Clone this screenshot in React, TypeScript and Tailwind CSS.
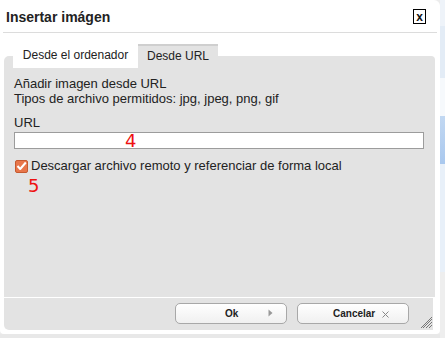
import React from "react";

export default function App() {
  const font = { fontFamily: '"Liberation Sans", Arial, sans-serif' };
  const dv = { fontFamily: '"DejaVu Sans", sans-serif' };
  return (
    <div className="w-[445px] h-[338px] flex bg-[#ececec] overflow-hidden" style={font}>
      <div className="w-[440px] h-[338px] flex flex-col">
        <div className="w-[440px] h-[334px] bg-white rounded-tr-[6px] rounded-b-[4px] flex flex-col">
          {/* title */}
          <div className="h-[33px] mx-[3px] border-b border-[#dcdcdc] flex items-center justify-between pl-[3px] pr-[11px]">
            <span className="text-[14px] font-bold text-[#222] leading-none mt-[1px]">Insertar imágen</span>
            <div className="w-[13px] h-[15px] border border-black bg-white flex items-center justify-center mt-[1px]">
              <span className="text-[12px] font-bold leading-none text-[#111]">x</span>
            </div>
          </div>
          {/* tabs */}
          <div className="h-[24px] mt-[11px] pl-[13px] flex text-[12px] text-[#222] relative z-10">
            <div className="w-[125px] h-[24px] bg-white flex items-center justify-center pb-[2px]">Desde el ordenador</div>
            <div className="w-[80px] h-[24px] bg-[#e3e3e3] border-t-[2px] border-[#cfcfcf] flex items-center justify-center pb-[2px]">Desde URL</div>
          </div>
          {/* panel */}
          <div className="mx-[4px] w-[431px] h-[241px] -mt-[12px] bg-[#e3e3e3] rounded-tl-[5px] rounded-tr-[4px] flex flex-col px-[10px] pt-[20px] text-[13px] text-[#222]">
            <div className="leading-[15px]">Añadir imagen desde URL</div>
            <div className="leading-[15px]">Tipos de archivo permitidos: jpg, jpeg, png, gif</div>
            <div className="leading-[16px] mt-[9px]">URL</div>
            <div className="mt-[1px] w-[410px] h-[17px] bg-white border border-[#9c9c9c] flex items-center pl-[110px]">
              <span className="text-[18px] text-[#ee1111] leading-none" style={dv}>4</span>
            </div>
            <div className="mt-[9px] flex items-center gap-[3px] ml-[1px]">
              <div className="w-[13px] h-[13px] rounded-[2px] bg-[#e8764a] border border-[#c55a30] flex items-center justify-center">
                <svg width="11" height="10" viewBox="0 0 11 10">
                  <path d="M1.5 5 L4.2 8 L9.8 1.5" stroke="white" strokeWidth="2" fill="none" strokeLinejoin="round" />
                </svg>
              </div>
              <span className="leading-[16px]">Descargar archivo remoto y referenciar de forma local</span>
            </div>
            <div className="ml-[14px] mt-[3px]">
              <span className="text-[18px] text-[#ee1111] leading-none" style={dv}>5</span>
            </div>
          </div>
          {/* footer */}
          <div className="mx-[4px] w-[429px] h-[32px] mt-[1px] bg-[#e3e3e3] rounded-bl-[5px] flex items-center relative">
            <div className="ml-[171px] w-[112px] h-[21px] rounded-[5px] border border-[#a8a8a8] bg-[linear-gradient(#ffffff,#f0f0f0)] flex items-center mt-[-2px]">
              <span className="ml-[49px] text-[10px] font-bold text-[#222]">Ok</span>
              <svg className="ml-[30px]" width="5" height="8" viewBox="0 0 5 8">
                <path d="M0.5 0.5 L4.5 4 L0.5 7.5 Z" fill="#999" />
              </svg>
            </div>
            <div className="ml-[10px] w-[112px] h-[21px] rounded-[5px] border border-[#a8a8a8] bg-[linear-gradient(#ffffff,#f0f0f0)] flex items-center mt-[-2px]">
              <span className="ml-[35px] text-[10px] font-bold text-[#222]">Cancelar</span>
              <svg className="ml-[7px] mt-[2px]" width="7" height="7" viewBox="0 0 7 7">
                <path d="M0.5 0.5 L6.5 6.5 M6.5 0.5 L0.5 6.5" stroke="#888" strokeWidth="1" />
              </svg>
            </div>
            <svg className="absolute right-[0px] bottom-[1px]" width="12" height="12" viewBox="0 0 12 12">
              <path d="M11 2 L2 11 M11 5 L5 11 M11 8 L8 11 M11 0 L0 11" stroke="#777" strokeWidth="1" />
            </svg>
          </div>
        </div>
        <div className="flex-1 bg-[#e8e8e8]" />
      </div>
      <div className="w-[5px] h-[338px] flex flex-col">
        <div className="h-[26px] bg-[#eef3f9]" />
        <div className="h-[52px] bg-[#e3ecf6]" />
        <div className="h-[38px] bg-[#f6f9fc]" />
        <div className="h-[48px] bg-[linear-gradient(#c2d8f2,#a9c8ee)]" />
        <div className="h-[108px] bg-[#e8f0f9]" />
        <div className="flex-1 bg-[#eeeeee]" />
      </div>
    </div>
  );
}
